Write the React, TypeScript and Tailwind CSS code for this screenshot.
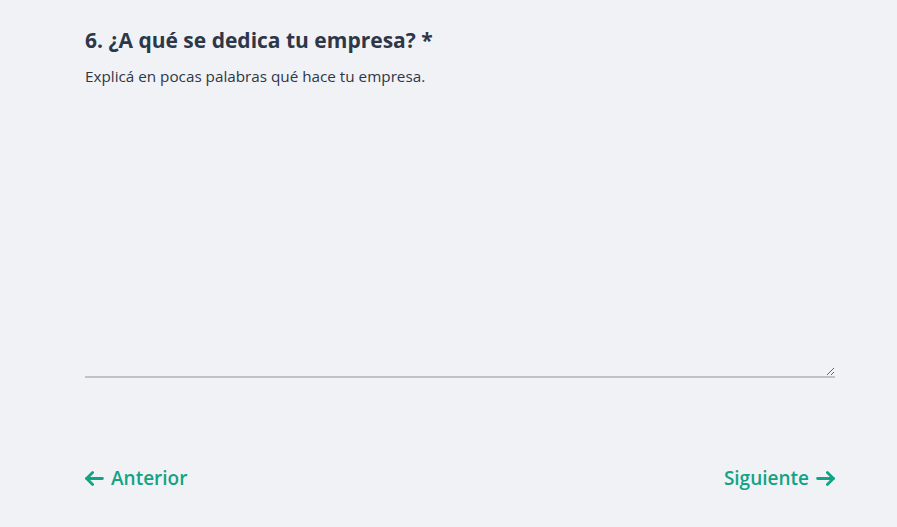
function Arrow({ dir }: { dir: 'left' | 'right' }) {
  return (
    <svg
      width="19"
      height="15"
      viewBox="0 0 19 15"
      fill="none"
      stroke="currentColor"
      strokeWidth="2.8"
      strokeLinecap="round"
      strokeLinejoin="round"
      className={dir === 'right' ? 'rotate-180' : ''}
    >
      <path d="M1.6 7.5H17.4" />
      <path d="M7.6 1.5L1.6 7.5L7.6 13.5" />
    </svg>
  );
}

export default function App() {
  return (
    <div
      className="min-h-[527px] w-full bg-[#f1f2f6] pt-[25px] text-[#2d3748]"
      style={{ fontFamily: '"Open Sans", "Noto Sans", sans-serif' }}
    >
      <div className="ml-[85px] w-[750px]">
        <h2 className="text-[21px] font-bold leading-[30px]">6. ¿A qué se dedica tu empresa? *</h2>
        <p className="mt-[10px] text-[15.25px] leading-[22px]">Explicá en pocas palabras qué hace tu empresa.</p>
        <textarea
          className="mt-[12px] block h-[279px] w-full resize-y border-b-2 border-[#c2c2c6] bg-transparent p-2 outline-none"
          aria-label="respuesta"
        />
        <div className="mt-[86px] flex items-center justify-between text-[19px] font-semibold text-[#12a384]">
          <button className="flex items-center gap-[7px]">
            <Arrow dir="left" />
            Anterior
          </button>
          <button className="flex items-center gap-[7px]">
            Siguiente
            <Arrow dir="right" />
          </button>
        </div>
      </div>
    </div>
  );
}
